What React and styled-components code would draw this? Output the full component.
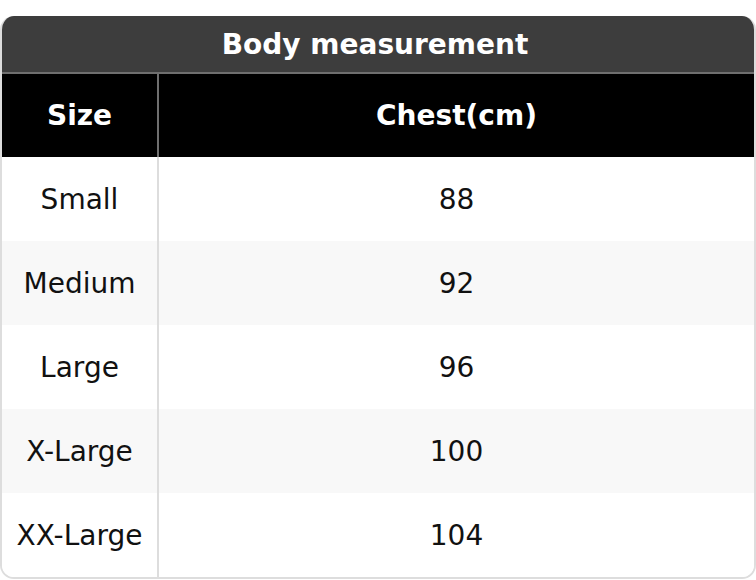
import React from "react";
import styled, { createGlobalStyle } from "styled-components";

const GlobalStyle = createGlobalStyle`
  body {
    margin: 0;
    background: #ffffff;
    font-family: "DejaVu Sans", "Liberation Sans", sans-serif;
  }
`;

const Page = styled.div`
  padding-top: 16px;
  width: 756px;
`;

const Card = styled.div`
  border: 2px solid #dddddd;
  border-top: none;
  border-radius: 14px;
  overflow: hidden;
`;

const Title = styled.div`
  height: 56px;
  padding-right: 6px;
  display: flex;
  align-items: center;
  justify-content: center;
  background-color: #3d3d3d;
  color: #ffffff;
  font-size: 28px;
  font-weight: bold;
  border-bottom: 2px solid #6f6f6f;
`;

const Row = styled.div`
  display: grid;
  grid-template-columns: 155px 1fr;
  height: ${props => (props.head ? "83px" : "84px")};
  background-color: ${props => (props.head ? "#000000" : props.striped ? "#f8f8f8" : "#ffffff")};
  color: ${props => (props.head ? "#ffffff" : "#111111")};
  font-size: 28px;
  font-weight: ${props => (props.head ? "bold" : "normal")};
`;

const Cell = styled.div`
  display: flex;
  align-items: center;
  justify-content: center;
  border-left: ${props => (props.divided ? "2px solid" : "none")};
  border-color: ${props => (props.head ? "#6f6f6f" : "#dddddd")};
`;

const rows = [
  { size: "Small", chest: 88 },
  { size: "Medium", chest: 92 },
  { size: "Large", chest: 96 },
  { size: "X-Large", chest: 100 },
  { size: "XX-Large", chest: 104 }
];

const App = () => (
  <Page>
    <GlobalStyle />
    <Card>
      <Title>Body measurement</Title>
      <Row head>
        <Cell head>Size</Cell>
        <Cell head divided>Chest(cm)</Cell>
      </Row>
      {rows.map((item, index) => (
        <Row key={item.size} striped={index % 2 === 1}>
          <Cell>{item.size}</Cell>
          <Cell divided>{item.chest}</Cell>
        </Row>
      ))}
    </Card>
  </Page>
);

export default App;
